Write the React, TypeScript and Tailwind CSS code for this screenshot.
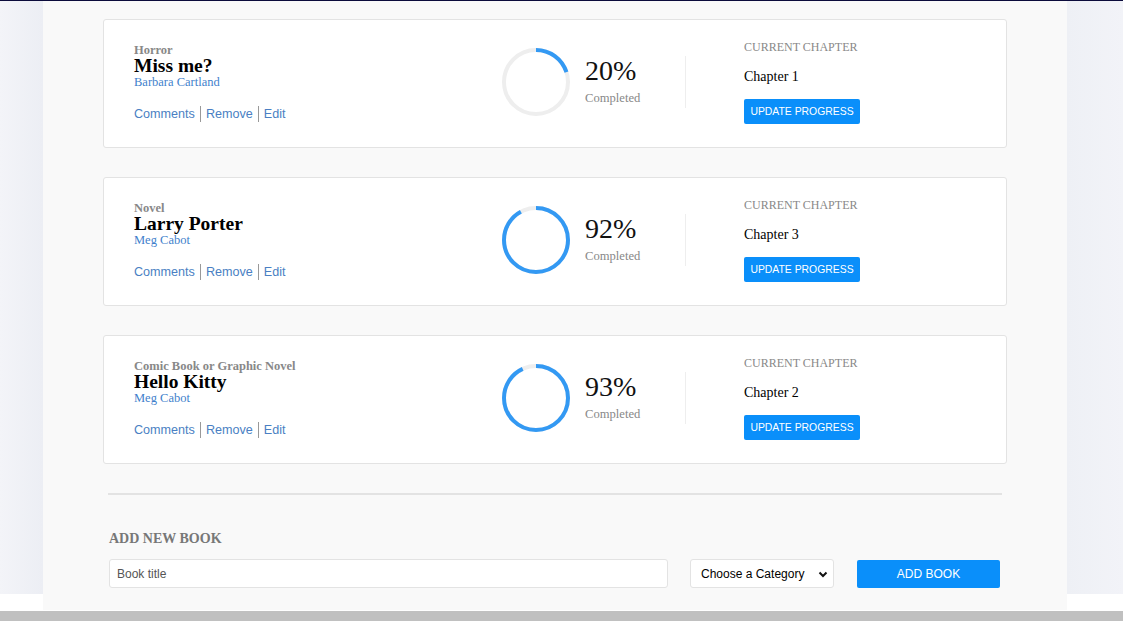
import React from "react";

type Book = { cat: string; title: string; author: string; pct: number; chapter: string };

const books: Book[] = [
  { cat: "Horror", title: "Miss me?", author: "Barbara Cartland", pct: 20, chapter: "Chapter 1" },
  { cat: "Novel", title: "Larry Porter", author: "Meg Cabot", pct: 92, chapter: "Chapter 3" },
  { cat: "Comic Book or Graphic Novel", title: "Hello Kitty", author: "Meg Cabot", pct: 93, chapter: "Chapter 2" },
];

const serif = { fontFamily: '"Liberation Serif", "Times New Roman", serif' };
const sans = { fontFamily: '"Liberation Sans", Arial, sans-serif' };

function Ring({ pct }: { pct: number }) {
  const r = 32;
  const c = 2 * Math.PI * r;
  return (
    <svg width="68" height="68" viewBox="0 0 68 68" className="shrink-0 self-start mt-[28px]">
      <circle cx="34" cy="34" r={r} fill="none" stroke="#eeeeee" strokeWidth="4" />
      <circle
        cx="34"
        cy="34"
        r={r}
        fill="none"
        stroke="#3399f3"
        strokeWidth="4"
        strokeDasharray={`${(c * pct) / 100} ${c}`}
        transform="rotate(-90 34 34)"
      />
    </svg>
  );
}

function Card({ b }: { b: Book }) {
  return (
    <div className="h-[129px] w-[904px] bg-white border border-[#e3e3e3] rounded-[3px] flex items-start" style={serif}>
      <div className="w-[398px] pl-[30px] mt-[23px]">
        <div className="text-[12.5px] leading-[14px] font-bold text-[#888888]">{b.cat}</div>
        <div className="text-[19.5px] leading-[18px] font-bold text-black">{b.title}</div>
        <div className="text-[12.5px] leading-[14px] text-[#3f7fcc]">{b.author}</div>
        <div className="flex items-center mt-[17px] text-[12.6px] leading-[16px] text-[#4a7fc3]" style={sans}>
          <span className="pr-[5px]">Comments</span>
          <span className="px-[5px] border-l border-[#999999]">Remove</span>
          <span className="pl-[5px] border-l border-[#999999]">Edit</span>
        </div>
      </div>
      <Ring pct={b.pct} />
      <div className="ml-[15px] w-[100px] mt-[36px]">
        <div className="text-[28px] leading-[30px] text-[#111111]">{b.pct}%</div>
        <div className="text-[12.6px] leading-[14px] text-[#888888] mt-[5px]">Completed</div>
      </div>
      <div className="w-px h-[52px] bg-[#eeeeee] mt-[36px]" />
      <div className="ml-[58px] mt-[20px]">
        <div className="text-[12px] leading-[14px] text-[#888888] uppercase">Current Chapter</div>
        <div className="text-[14px] leading-[16px] text-black mt-[15px]">{b.chapter}</div>
        <button
          className="mt-[14px] h-[25px] w-[116px] bg-[#0a8ffa] text-white text-[10.4px] rounded-[2px] uppercase"
          style={sans}
        >
          Update Progress
        </button>
      </div>
    </div>
  );
}

export default function App() {
  return (
    <div className="w-[1123px] h-[621px] bg-white flex flex-col overflow-hidden">
      <div className="h-px bg-[#0b0b3b] shrink-0" />
      <div className="flex flex-1 min-h-0">
        <div className="w-[43px] h-[593px] bg-gradient-to-r from-[#f3f4f8] to-[#eceef4] shrink-0" />
        <div className="w-[1024px] h-[609px] bg-[#f9f9f9] shrink-0">
          <div className="pt-[18px] pl-[60px] flex flex-col gap-[29px]">
            {books.map((b) => (
              <Card key={b.title} b={b} />
            ))}
          </div>
          <div className="ml-[65px] mr-[65px] mt-[29px] h-[2px] bg-[#e3e3e3]" />
          <div className="ml-[66px] mt-[36px] text-[14px] leading-[16px] font-bold text-[#777777]" style={serif}>
            ADD NEW BOOK
          </div>
          <div className="ml-[66px] mt-[12px] flex items-center">
            <input
              className="w-[559px] h-[29px] bg-white border border-[#e3e3e3] rounded-[3px] px-[7px] text-[12px] text-[#333] placeholder:text-[#555]"
              style={sans}
              placeholder="Book title"
            />
            <div
              className="ml-[22px] w-[144px] h-[29px] bg-white border border-[#e3e3e3] rounded-[3px] flex items-center justify-between pl-[10px] pr-[4px] text-[12px] text-black"
              style={sans}
            >
              <span>Choose a Category</span>
              <svg width="12" height="12" viewBox="0 0 12 12">
                <path d="M2.5 4.5 L6 8 L9.5 4.5" fill="none" stroke="#111" strokeWidth="2" />
              </svg>
            </div>
            <button
              className="ml-[23px] w-[143px] h-[28px] bg-[#0a8ffa] text-white text-[12px] rounded-[2px] uppercase"
              style={sans}
            >
              Add Book
            </button>
          </div>
        </div>
        <div className="flex-1 h-[593px] bg-gradient-to-r from-[#eef0f5] to-[#f2f3f8]" />
      </div>
      <div className="h-[10px] bg-[#c0c0c0] shrink-0" />
    </div>
  );
}
